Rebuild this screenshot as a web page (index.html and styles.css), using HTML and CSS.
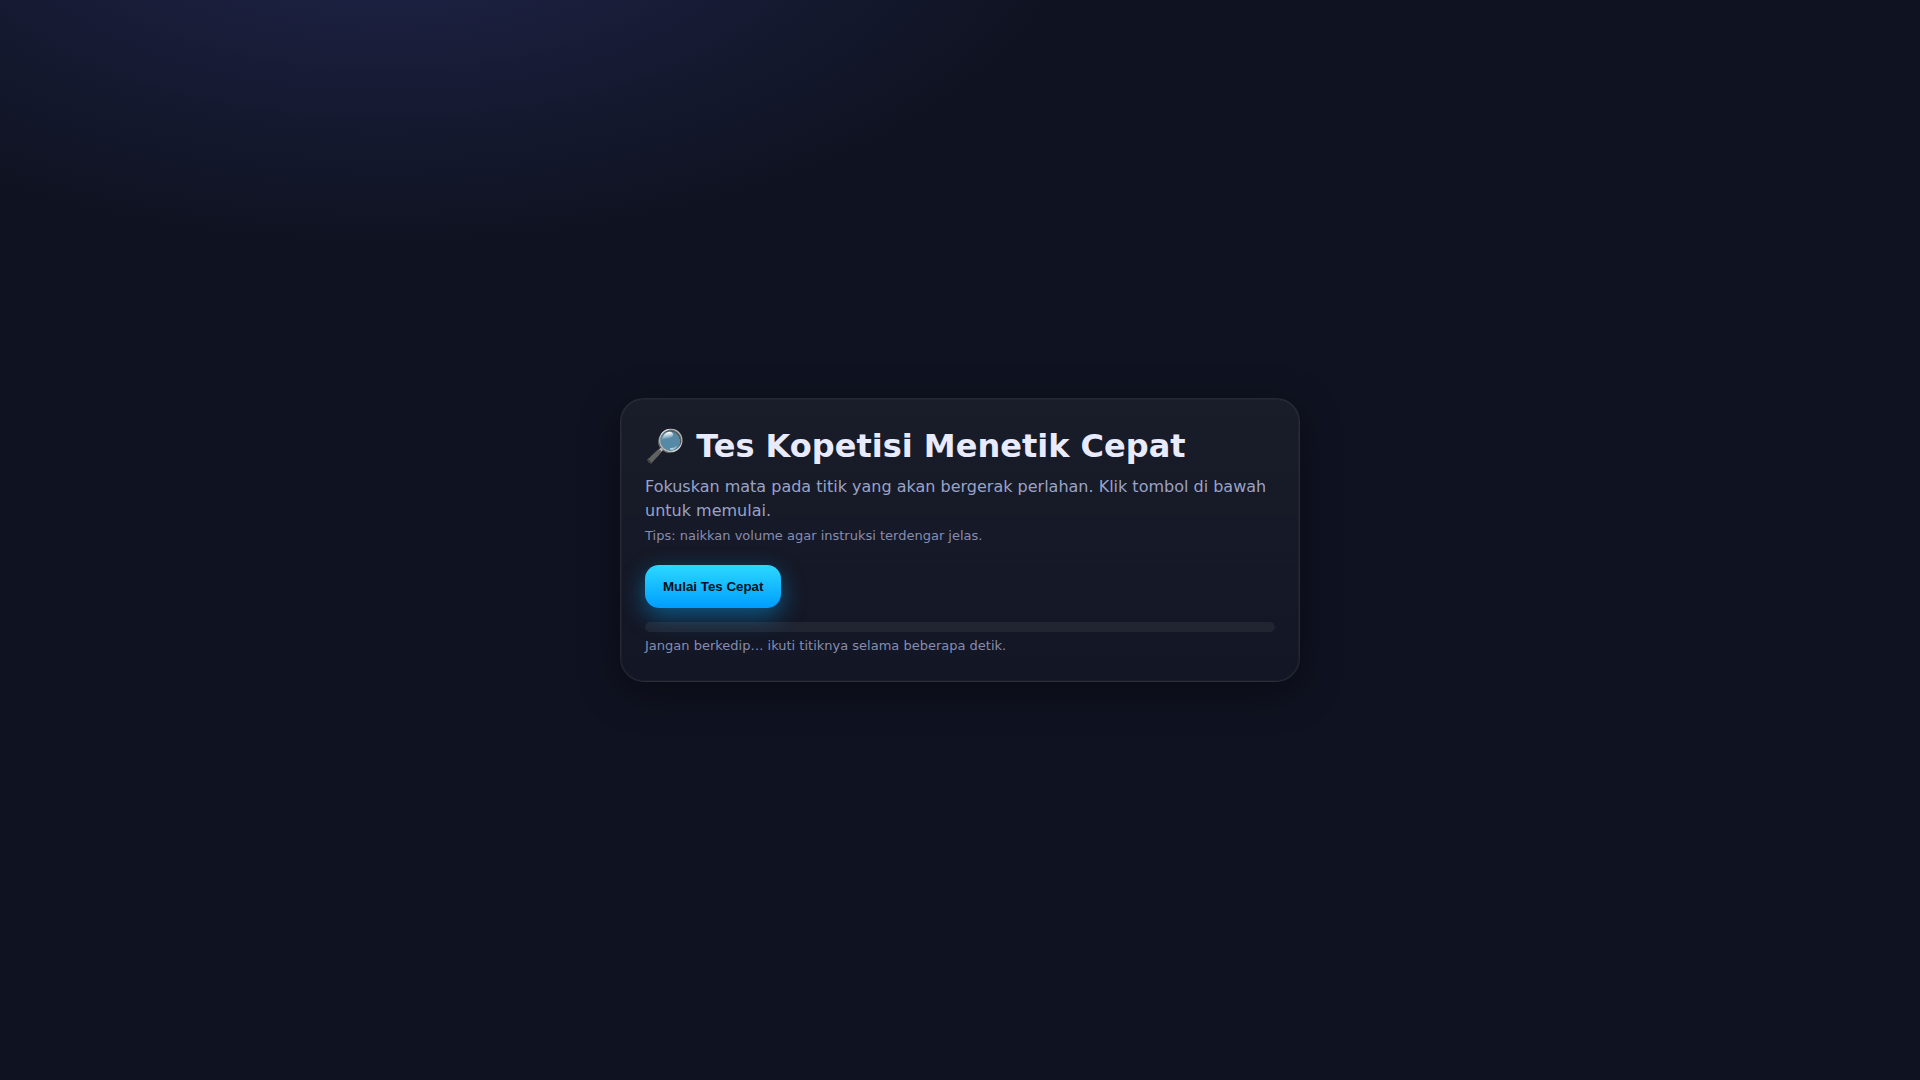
FILE: index.html
```html
<!DOCTYPE html>
<html lang="id">
<head>
    <meta charset="UTF-8">
    <meta name="viewport" content="width=device-width, initial-scale=1.0">
    <title>Tes Kopetisi Menetik Cepat</title>
    <link rel="stylesheet" href="styles.css">
</head>
<body>
    <main class="card">
        <h1>🔎 Tes Kopetisi Menetik Cepat</h1>
        <p class="lead">Fokuskan mata pada titik yang akan bergerak perlahan. Klik tombol di bawah untuk memulai.</p>
        <p class="hint">Tips: naikkan volume agar instruksi terdengar jelas.</p>

        <button type="button" class="start-btn">Mulai Tes Cepat</button>

        <div class="progress"></div>
        <p class="hint">Jangan berkedip… ikuti titiknya selama beberapa detik.</p>
    </main>
</body>
</html>
```
FILE: styles.css
```css
* {
    box-sizing: border-box;
}

body {
    margin: 0;
    min-height: 100vh;
    display: grid;
    place-items: center;
    padding: 24px;
    font-family: "DejaVu Sans", sans-serif;
    line-height: 24px;
    color: #e8ebff;
    background: radial-gradient(1200px 600px at 20% -10%, #20264d, transparent 60%), #0f1220;
}

.card {
    width: 100%;
    max-width: 680px;
    padding: 24px;
    border: 1px solid rgba(255, 255, 255, 0.08);
    border-radius: 24px;
    background: linear-gradient(180deg, rgba(255, 255, 255, 0.045), rgba(255, 255, 255, 0.02));
    box-shadow: 0 10px 40px rgba(0, 0, 0, 0.35), inset 0 0 0 1px rgba(255, 255, 255, 0.03);
}

h1 {
    margin: 0 0 6px;
    font-size: 32px;
    line-height: 46px;
}

.lead {
    margin: 0;
    color: #9aa3c7;
}

.hint {
    margin: 2px 0 0;
    font-size: 13px;
    line-height: 22px;
    color: #868db0;
}

.start-btn {
    display: block;
    margin-top: 18px;
    padding: 14px 18px;
    border: none;
    border-radius: 14px;
    font-family: "Liberation Sans", Arial, sans-serif;
    font-weight: 700;
    color: #001018;
    background: linear-gradient(180deg, #2bd9ff, #009dff);
    box-shadow: 0 8px 24px rgba(0, 174, 255, 0.45);
    cursor: pointer;
}

.progress {
    height: 10px;
    margin: 14px 0 3px;
    border-radius: 6px;
    background: rgba(255, 255, 255, 0.06);
}
```
